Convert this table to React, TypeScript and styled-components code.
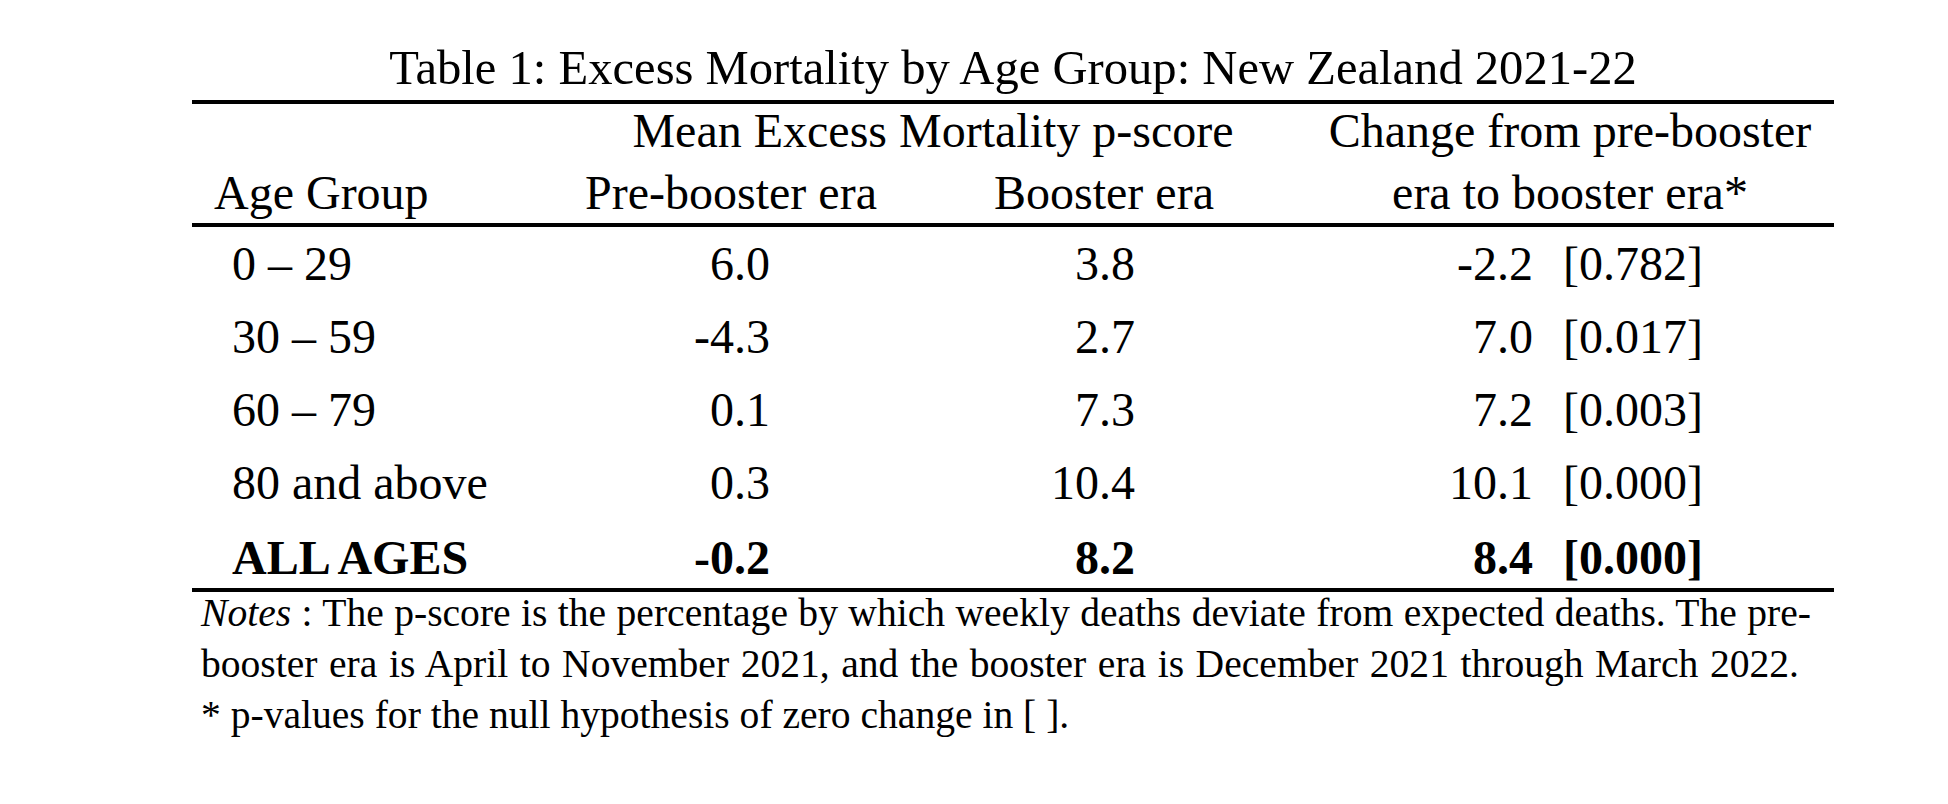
import React from 'react';
import styled, { createGlobalStyle } from 'styled-components';

const GlobalStyle = createGlobalStyle`
  html, body {
    margin: 0;
    padding: 0;
    background: #fff;
  }
  body {
    font-family: "Liberation Serif", "Times New Roman", serif;
    color: #000;
  }
`;

const Page = styled.div`
  width: 1948px;
  height: 804px;
  box-sizing: border-box;
  padding: 38px 0 0 192px;
  overflow: hidden;
`;

const Figure = styled.div`
  width: 1642px;
`;

const Caption = styled.div`
  font-size: 48.6px;
  line-height: 60px;
  text-align: center;
  white-space: nowrap;
  margin-bottom: 2px;
`;

const Table = styled.div`
  border-top: 4px solid #000;
  border-bottom: 4px solid #000;
`;

const Row = styled.div<{ $kind: 'top' | 'head' | 'body' | 'total' }>`
  display: grid;
  grid-template-columns: 368px 342px 404px 528px;
  font-size: 48px;
  white-space: nowrap;
  line-height: ${(p) => (p.$kind === 'top' ? '54px' : p.$kind === 'head' ? '61px' : '53px')};
  padding: ${(p) =>
    p.$kind === 'top' ? '0' : p.$kind === 'head' ? '4px 0 0' : p.$kind === 'total' ? '12px 0 4px' : '10px 0'};
  font-weight: ${(p) => (p.$kind === 'total' ? 700 : 400)};
  border-bottom: ${(p) => (p.$kind === 'head' ? '4px solid #000' : 'none')};
`;

const Label = styled.div<{ $indent: number }>`
  padding-left: ${(p) => p.$indent}px;
`;

const HeadCell = styled.div<{ $span?: number }>`
  text-align: center;
  grid-column: span ${(p) => p.$span ?? 1};
`;

const Num = styled.div<{ $right: number }>`
  text-align: right;
  padding-right: ${(p) => p.$right}px;
`;

const Change = styled.div`
  display: flex;
  gap: 30px;
`;

const ChangeValue = styled.span`
  width: 227px;
  text-align: right;
`;

const Notes = styled.div`
  font-size: 39.6px;
  line-height: 51px;
  margin-top: -4px;
  padding-left: 9px;
`;

// the first two note lines are set justified, as in the paper
const NoteLine = styled.div<{ $width?: number }>`
  white-space: nowrap;
  width: ${(p) => (p.$width ? `${p.$width}px` : 'auto')};
  text-align: ${(p) => (p.$width ? 'justify' : 'left')};
  text-align-last: ${(p) => (p.$width ? 'justify' : 'auto')};
`;

type Entry = {
  age: string;
  pre: string;
  booster: string;
  change: string;
  p: string;
};

const rows: Entry[] = [
  { age: '0 – 29', pre: '6.0', booster: '3.8', change: '-2.2', p: '[0.782]' },
  { age: '30 – 59', pre: '-4.3', booster: '2.7', change: '7.0', p: '[0.017]' },
  { age: '60 – 79', pre: '0.1', booster: '7.3', change: '7.2', p: '[0.003]' },
  { age: '80 and above', pre: '0.3', booster: '10.4', change: '10.1', p: '[0.000]' },
];

const total: Entry = { age: 'ALL AGES', pre: '-0.2', booster: '8.2', change: '8.4', p: '[0.000]' };

const DataRow = ({ row, kind }: { row: Entry; kind: 'body' | 'total' }) => (
  <Row $kind={kind}>
    <Label $indent={40}>{row.age}</Label>
    <Num $right={132}>{row.pre}</Num>
    <Num $right={171}>{row.booster}</Num>
    <Change>
      <ChangeValue>{row.change}</ChangeValue>
      <span>{row.p}</span>
    </Change>
  </Row>
);

export default function App() {
  return (
    <>
      <GlobalStyle />
      <Page>
        <Figure>
          <Caption>Table 1: Excess Mortality by Age Group: New Zealand 2021-22</Caption>
          <Table>
            <Row $kind="top">
              <div />
              <HeadCell $span={2}>Mean Excess Mortality p-score</HeadCell>
              <HeadCell>Change from pre-booster</HeadCell>
            </Row>
            <Row $kind="head">
              <Label $indent={22}>Age Group</Label>
              <HeadCell>Pre-booster era</HeadCell>
              <HeadCell>Booster era</HeadCell>
              <HeadCell>era to booster era*</HeadCell>
            </Row>
            {rows.map((r) => (
              <DataRow key={r.age} row={r} kind="body" />
            ))}
            <DataRow row={total} kind="total" />
          </Table>
          <Notes>
            <NoteLine $width={1610}>
              <i>Notes</i> : The p-score is the percentage by which weekly deaths deviate from expected deaths. The pre-
            </NoteLine>
            <NoteLine $width={1598}>
              booster era is April to November 2021, and the booster era is December 2021 through March 2022.
            </NoteLine>
            <NoteLine>* p-values for the null hypothesis of zero change in [ ].</NoteLine>
          </Notes>
        </Figure>
      </Page>
    </>
  );
}
